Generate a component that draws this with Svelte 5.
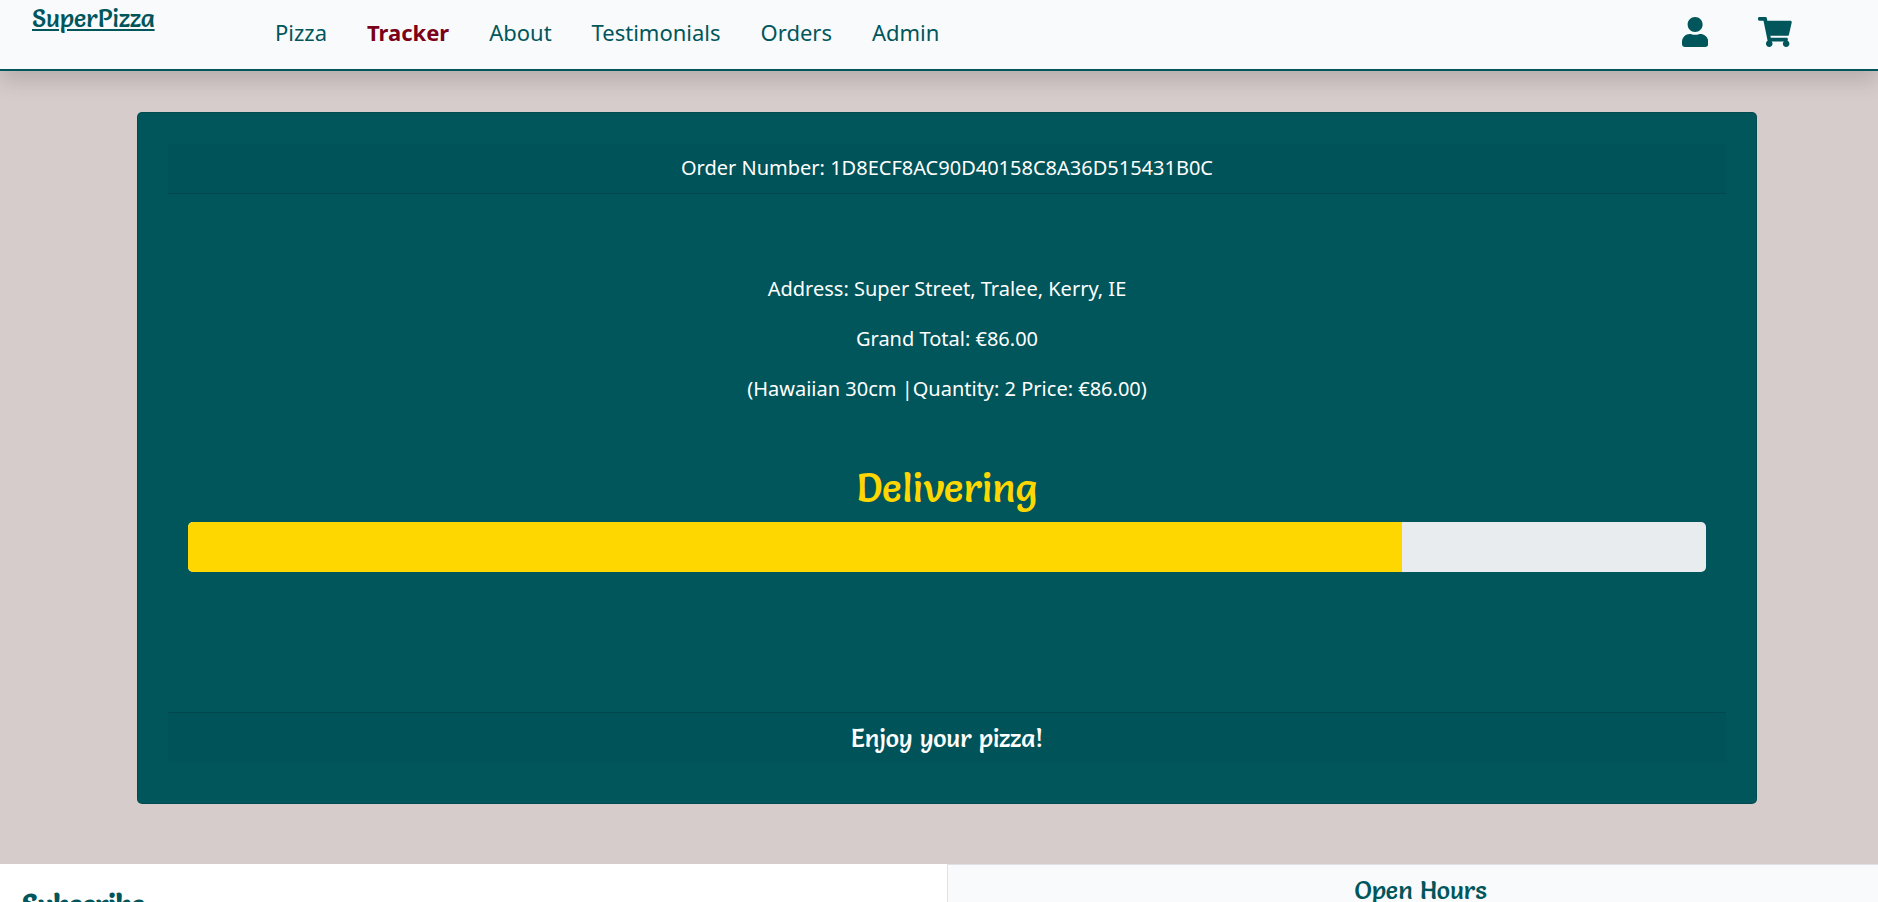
<script>
  const links = ['Pizza', 'Tracker', 'About', 'Testimonials', 'Orders', 'Admin'];
  const active = 'Tracker';
  const order = {
    number: '1D8ECF8AC90D40158C8A36D515431B0C',
    address: 'Super Street, Tralee, Kerry, IE',
    total: '€86.00',
    items: '(Hawaiian 30cm |Quantity: 2 Price: €86.00)',
    status: 'Delivering',
    progress: 80
  };
</script>

<div class="page">
  <header>
    <a class="brand" href="#home">SuperPizza</a>
    <nav aria-label="Main">
      {#each links as link}
        <a href={'#' + link.toLowerCase()} class:active={link === active}>{link}</a>
      {/each}
    </nav>
    <div class="actions">
      <a href="#account" aria-label="Account">
        <svg viewBox="0 0 448 512" aria-hidden="true"><path d="M224 256c70.7 0 128-57.3 128-128S294.7 0 224 0 96 57.3 96 128s57.3 128 128 128zm89.6 32h-16.7c-22.2 10.2-46.9 16-72.9 16s-50.6-5.8-72.9-16h-16.7C60.2 288 0 348.2 0 422.4V464c0 26.5 21.5 48 48 48h352c26.5 0 48-21.5 48-48v-41.6c0-74.2-60.2-134.4-134.4-134.4z" /></svg>
      </a>
      <a href="#cart" aria-label="Cart">
        <svg viewBox="0 0 576 512" aria-hidden="true"><path d="M528.12 301.319l47.273-208C578.806 78.301 567.391 64 551.99 64H159.208l-9.166-44.81C147.758 8.021 137.93 0 126.529 0H24C10.745 0 0 10.745 0 24v16c0 13.255 10.745 24 24 24h69.883l70.248 343.435C147.325 417.1 136 435.222 136 456c0 30.928 25.072 56 56 56s56-25.072 56-56c0-15.674-6.447-29.835-16.824-40h209.647C430.447 426.165 424 440.326 424 456c0 30.928 25.072 56 56 56s56-25.072 56-56c0-22.172-12.888-41.332-31.579-50.405l5.517-24.276c3.413-15.018-8.002-29.319-23.403-29.319H218.117l-6.545-32h293.145c11.206 0 20.92-7.754 23.403-18.681z" /></svg>
      </a>
    </div>
  </header>

  <main>
    <section class="card">
      <div class="band top">Order Number: {order.number}</div>
      <div class="details">
        <p>Address: {order.address}</p>
        <p>Grand Total: {order.total}</p>
        <p>{order.items}</p>
        <h1 id="status">{order.status}</h1>
        <progress value={order.progress} max="100" aria-labelledby="status"></progress>
      </div>
      <div class="band bottom">Enjoy your pizza!</div>
    </section>
  </main>

  <footer>
    <section class="subscribe"><h2>Subscribe</h2></section>
    <section class="hours"><h2>Open Hours</h2></section>
  </footer>
</div>

<style>
  :global(body) {
    margin: 0;
    overflow: hidden;
    background: #fff;
  }

  .page {
    --teal: #00565b;
    --display: Salsa, Lato, sans-serif;
    font-family: 'Noto Sans', sans-serif;
    font-size: 20px;
    line-height: 30px;
    background: #d6cccb;
  }

  header {
    position: relative;
    display: flex;
    align-items: flex-start;
    box-sizing: border-box;
    min-height: 71px;
    padding: 0 86px 0 32px;
    background: #f8fafc;
    border-bottom: 2px solid var(--teal);
    box-shadow: 0 10px 20px rgba(0, 0, 0, 0.15);
  }

  header a {
    color: var(--teal);
    text-decoration: none;
  }

  header .brand {
    width: 243px;
    padding-top: 3px;
    font-family: var(--display);
    font-size: 25px;
    font-weight: 500;
    text-decoration: underline;
  }

  nav {
    display: flex;
    gap: 40px;
    padding-top: 17px;
    font-size: 22px;
    font-weight: 400;
  }

  header .active {
    color: #7b0019;
    font-weight: 700;
  }

  .actions {
    display: flex;
    gap: 50px;
    margin-left: auto;
    padding-top: 17px;
  }

  .actions svg {
    display: block;
    height: 30px;
    fill: currentColor;
  }

  main,
  footer {
    width: calc(100% + 16px);
    box-sizing: border-box;
  }

  main {
    padding: 41px 137px 60px;
  }

  .card {
    padding: 31px 30px 41px;
    color: #fff;
    text-align: center;
    background: var(--teal);
    border: 1px solid rgba(0, 0, 0, 0.125);
    border-radius: 5px;
  }

  .band {
    box-sizing: border-box;
    min-height: 50px;
    background: rgba(0, 0, 0, 0.03);
  }

  .top {
    padding: 9px 20px 10px;
    border-bottom: 1px solid rgba(0, 0, 0, 0.125);
  }

  .bottom {
    padding: 10px 20px 9px;
    font-family: var(--display);
    font-size: 25px;
    font-weight: 500;
    border-top: 1px solid rgba(0, 0, 0, 0.125);
  }

  .details {
    padding: 80px 20px 140px;
  }

  p {
    margin: 0 0 20px;
  }

  h1,
  h2 {
    margin: 0;
    font-family: var(--display);
  }

  h1 {
    padding-top: 40px;
    font-size: 40px;
    font-weight: 500;
    line-height: 48px;
    color: #ffd700;
  }

  progress {
    display: block;
    width: 100%;
    height: 50px;
    margin-top: 10px;
    overflow: hidden;
    appearance: none;
    border: 0;
    border-radius: 5px;
  }

  progress::-webkit-progress-bar {
    background: #e9ecef;
  }

  progress::-webkit-progress-value {
    background: #ffd700;
  }

  footer {
    display: grid;
    grid-template-columns: 1fr 1fr;
    color: var(--teal);
    background: #fff;
  }

  .subscribe {
    padding: 26px 22px;
  }

  .subscribe h2 {
    font-size: 28px;
    font-weight: 700;
  }

  .hours {
    padding: 10px 20px;
    text-align: center;
    background: #f8fafc;
    border: 1px solid #dee2e6;
  }

  .hours h2 {
    font-size: 25px;
    font-weight: 500;
  }
</style>
